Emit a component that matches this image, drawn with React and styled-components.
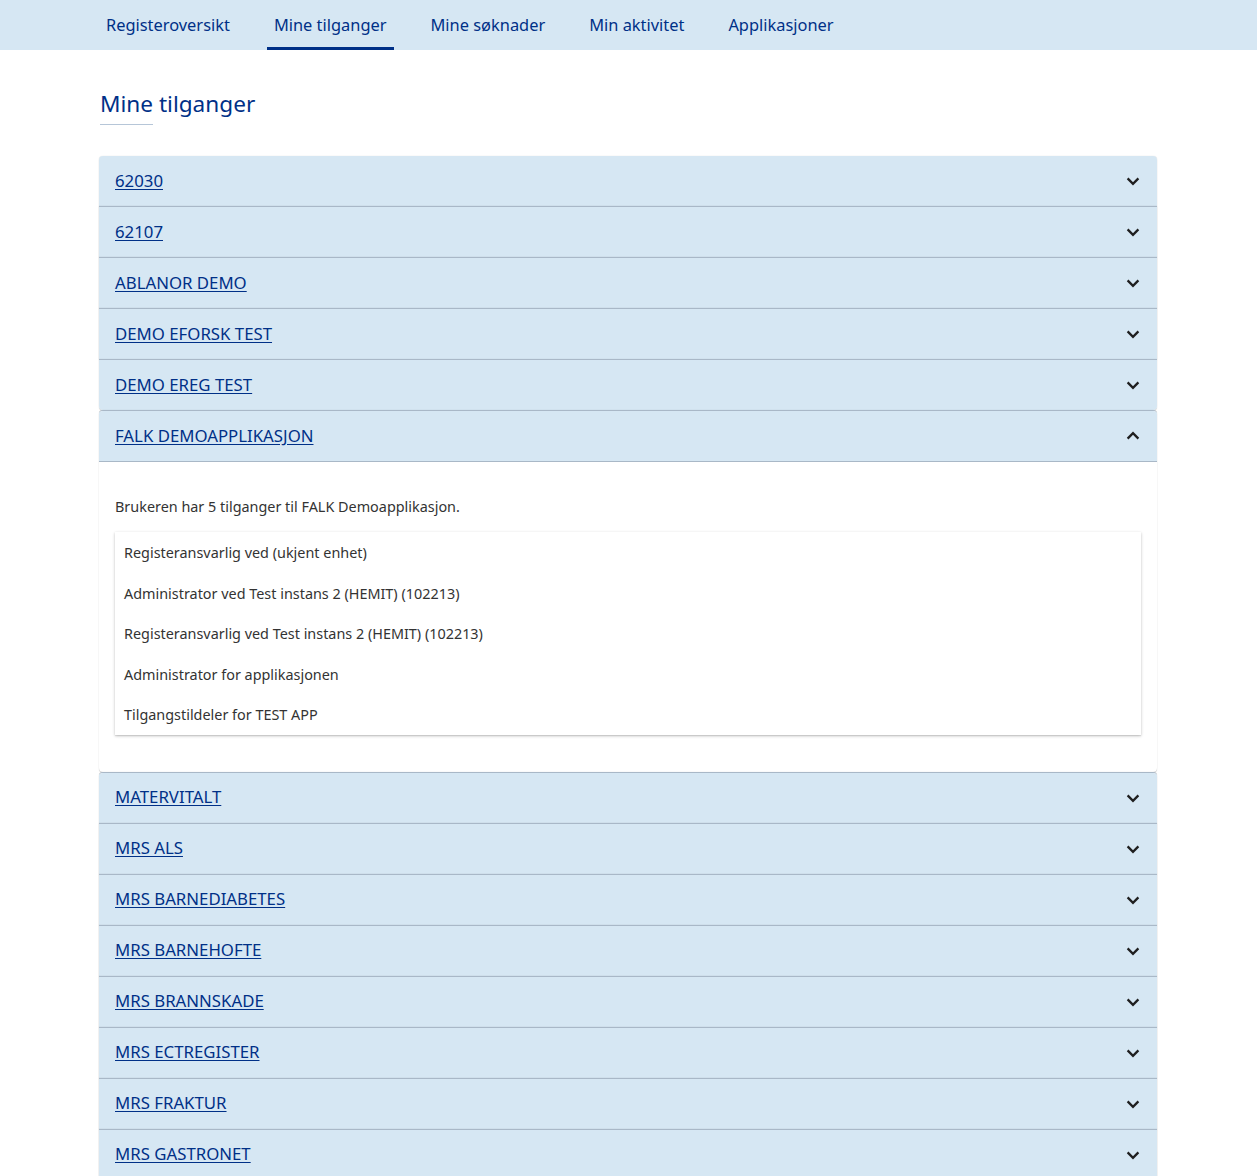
import React, { useState } from 'react';
import styled, { createGlobalStyle } from 'styled-components';

const GlobalStyle = createGlobalStyle`
    body {
        margin: 0;
        background: #ffffff;
        font-family: 'Noto Sans', 'Open Sans', sans-serif;
        color: #003087;
    }
`;

const NavBar = styled.nav`
    height: 50px;
    background-color: #d6e7f3;
    display: flex;
    align-items: stretch;
    padding-left: 99px;
    gap: 30px;
`;

const NavItem = styled.a`
    display: flex;
    align-items: center;
    padding: 1px 7px 0;
    font-size: 16.4px;
    color: #003087;
    text-decoration: none;
    cursor: pointer;
    border-bottom: 3px solid ${props => (props.active ? '#003087' : 'transparent')};
    box-sizing: border-box;
`;

const Main = styled.main`
    width: 1058px;
    margin-left: 99px;
    padding-top: 38px;
`;

const Heading = styled.h1`
    margin: 0 0 0 1px;
    font-size: 22.6px;
    font-weight: 400;
    line-height: 32px;
    color: #003087;
`;

const HeadingRule = styled.div`
    width: 53px;
    height: 1px;
    margin: 4px 0 31px 1px;
    background-color: #b6c6d8;
`;

const List = styled.div`
    display: flex;
    flex-direction: column;
`;

const radiusFor = ({ first, open, roundTop, roundBottom }) => {
    const top = first || open || roundTop ? '4px' : '0';
    const bottom = open || roundBottom ? '4px' : '0';
    return `${top} ${top} ${bottom} ${bottom}`;
};

const Panel = styled.div`
    background: #ffffff;
    border-radius: ${radiusFor};
    box-shadow: 0 1px 1px rgba(0, 0, 0, 0.14), 0 0 1px rgba(0, 0, 0, 0.2);
    border-top: ${props => (props.first ? 'none' : '1px solid #a9b8c7')};
    overflow: hidden;
`;

const Summary = styled.div`
    height: 48px;
    display: flex;
    align-items: center;
    justify-content: space-between;
    padding: 0 12px 2px 16px;
    background-color: #d6e7f3;
    border-bottom: ${props => (props.open ? '1px solid #a9b8c7' : 'none')};
    cursor: pointer;
`;

const Title = styled.a`
    font-size: 16.8px;
    color: #003087;
    text-decoration: underline;
    text-underline-offset: 2px;
`;

const Chevron = styled.svg`
    width: 24px;
    height: 24px;
    fill: none;
    stroke: #1f1f1f;
    stroke-width: 2.3;
    margin-top: 2px;
    transform: ${props => (props.open ? 'rotate(180deg)' : 'none')};
`;

const Details = styled.div`
    padding: 35px 16px 37px;
`;

const Intro = styled.p`
    margin: 0 0 15px;
    font-size: 14.4px;
    line-height: 20px;
    color: #333333;
`;

const RoleList = styled.ul`
    list-style: none;
    margin: 0;
    padding: 0;
    background: #ffffff;
    box-shadow: 0 1px 3px rgba(0, 0, 0, 0.22), 0 1px 1px rgba(0, 0, 0, 0.08);
`;

const Role = styled.li`
    padding: 11px 9px 9px;
    font-size: 14.4px;
    line-height: 20.6px;
    color: #333333;
`;

const apps = [
    '62030',
    '62107',
    'ABLANOR DEMO',
    'DEMO EFORSK TEST',
    'DEMO EREG TEST',
    'FALK DEMOAPPLIKASJON',
    'MATERVITALT',
    'MRS ALS',
    'MRS BARNEDIABETES',
    'MRS BARNEHOFTE',
    'MRS BRANNSKADE',
    'MRS ECTREGISTER',
    'MRS FRAKTUR',
    'MRS GASTRONET',
];

const roles = [
    'Registeransvarlig ved (ukjent enhet)',
    'Administrator ved Test instans 2 (HEMIT) (102213)',
    'Registeransvarlig ved Test instans 2 (HEMIT) (102213)',
    'Administrator for applikasjonen',
    'Tilgangstildeler for TEST APP',
];

const ExpandIcon = ({ open }) => (
    <Chevron open={open} viewBox="0 0 24 24">
        <path d="M6.6 9.4 12 14.8 17.4 9.4" />
    </Chevron>
);

const App = () => {
    const [openApp, setOpenApp] = useState('FALK DEMOAPPLIKASJON');
    const openIndex = apps.indexOf(openApp);

    return (
        <>
            <GlobalStyle />
            <NavBar>
                <NavItem>Registeroversikt</NavItem>
                <NavItem active>Mine tilganger</NavItem>
                <NavItem>Mine søknader</NavItem>
                <NavItem>Min aktivitet</NavItem>
                <NavItem>Applikasjoner</NavItem>
            </NavBar>
            <Main>
                <Heading>Mine tilganger</Heading>
                <HeadingRule />
                <List>
                    {apps.map((name, i) => {
                        const open = name === openApp;
                        return (
                            <Panel
                                key={name}
                                first={i === 0}
                                open={open}
                                roundTop={openIndex >= 0 && i === openIndex + 1}
                                roundBottom={openIndex >= 0 && i === openIndex - 1}
                            >
                                <Summary open={open} onClick={() => setOpenApp(open ? null : name)}>
                                    <Title>{name}</Title>
                                    <ExpandIcon open={open} />
                                </Summary>
                                {open && (
                                    <Details>
                                        <Intro>Brukeren har 5 tilganger til FALK Demoapplikasjon.</Intro>
                                        <RoleList>
                                            {roles.map(role => (
                                                <Role key={role}>{role}</Role>
                                            ))}
                                        </RoleList>
                                    </Details>
                                )}
                            </Panel>
                        );
                    })}
                </List>
            </Main>
        </>
    );
};

export default App;
